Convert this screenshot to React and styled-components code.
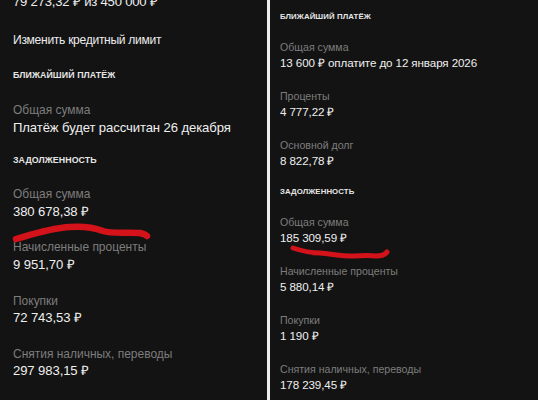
import React from 'react';
import styled, { createGlobalStyle } from 'styled-components';

const GlobalStyle = createGlobalStyle`
  *, *::before, *::after {
    box-sizing: border-box;
  }
  html, body {
    margin: 0;
    padding: 0;
    background: #131313;
  }
  body {
    font-family: "Liberation Sans", Arial, sans-serif;
    -webkit-font-smoothing: antialiased;
  }
`;

const Screen = styled.div`
  display: flex;
  flex-direction: row;
  width: 538px;
  height: 400px;
  overflow: hidden;
  background: #131313;
`;

const Divider = styled.div`
  width: 3px;
  flex: none;
  background: #ededed;
`;

const Panel = styled.section`
  position: relative;
  flex: ${p => (p.$grow ? '1' : 'none')};
  width: ${p => (p.$width ? `${p.$width}px` : 'auto')};
  display: flex;
  flex-direction: column;
  padding-left: ${p => p.$pad}px;
  padding-top: ${p => Math.max(p.$top, 0)}px;
  margin-top: ${p => Math.min(p.$top, 0)}px;
  color: #ececec;
`;

const Action = styled.div`
  font-size: ${p => (p.$narrow ? 10.7 : 11.6) * p.$k}px;
  line-height: ${p => 16 * p.$k}px;
  letter-spacing: ${p => (p.$narrow ? -0.3 : -0.2)}px;
  color: #ededed;
  margin-bottom: ${p => p.$after}px;
`;

const SectionTitle = styled.div`
  font-size: ${p => 7.8 * p.$k}px;
  line-height: ${p => 10 * p.$k}px;
  font-weight: 700;
  letter-spacing: 0.1px;
  text-transform: uppercase;
  color: #e6e6e6;
  margin-bottom: ${p => 18 * p.$k}px;
`;

const Field = styled.div`
  display: flex;
  flex-direction: column;
  margin-bottom: ${p => p.$gap}px;
`;

const Label = styled.span`
  font-size: ${p => 10.6 * p.$k}px;
  line-height: ${p => 15 * p.$k}px;
  color: #7d7d7d;
`;

const Value = styled.span`
  font-size: ${p => 11.6 * p.$k}px;
  line-height: ${p => 16 * p.$k}px;
  letter-spacing: -0.1px;
  color: #efefef;
`;

const Scribble = styled.svg`
  position: absolute;
  left: 0;
  top: 0;
  pointer-events: none;
  overflow: visible;
`;

function Section({ k, gap, title, fields }) {
  return (
    <>
      <SectionTitle $k={k}>{title}</SectionTitle>
      {fields.map(([label, value]) => (
        <Field $gap={gap} key={label}>
          <Label $k={k}>{label}</Label>
          <Value $k={k}>{value}</Value>
        </Field>
      ))}
    </>
  );
}

export default function App() {
  const kl = 1.13;
  const kr = 1;
  return (
    <Screen>
      <GlobalStyle />
      <Panel $width={267} $pad={13} $top={-7}>
        <Action $k={kl} $after={20}>79 273,32 ₽ из 450 000 ₽</Action>
        <Action $k={kl} $narrow $after={21}>Изменить кредитный лимит</Action>
        <Section
          k={kl}
          gap={18}
          title="Ближайший платёж"
          fields={[['Общая сумма', 'Платёж будет рассчитан 26 декабря']]}
        />
        <Section
          k={kl}
          gap={18}
          title="Задолженность"
          fields={[
            ['Общая сумма', '380 678,38 ₽'],
            ['Начисленные проценты', '9 951,70 ₽'],
            ['Покупки', '72 743,53 ₽'],
            ['Снятия наличных, переводы', '297 983,15 ₽'],
          ]}
        />
        <Scribble width="267" height="400">
          <path
            d="M16 246 C 30 242, 50 235, 70 234 C 85 233, 95 235, 103 238 C 112 241, 128 239, 140 240 C 144 241, 146 242, 147 243"
            fill="none"
            stroke="#d3121a"
            strokeWidth="6.5"
            strokeLinecap="round"
          />
        </Scribble>
      </Panel>
      <Divider />
      <Panel $grow $pad={10} $top={12}>
        <Section
          k={kr}
          gap={18}
          title="Ближайший платёж"
          fields={[
            ['Общая сумма', '13 600 ₽ оплатите до 12 января 2026'],
            ['Проценты', '4 777,22 ₽'],
            ['Основной долг', '8 822,78 ₽'],
          ]}
        />
        <Section
          k={kr}
          gap={18}
          title="Задолженность"
          fields={[
            ['Общая сумма', '185 309,59 ₽'],
            ['Начисленные проценты', '5 880,14 ₽'],
            ['Покупки', '1 190 ₽'],
            ['Снятия наличных, переводы', '178 239,45 ₽'],
          ]}
        />
        <Scribble width="268" height="400">
          <path
            d="M23 248 C 32 251, 40 253, 50 253 C 62 254, 72 256, 82 256 C 90 256, 98 255, 106 256 C 111 256, 115 255, 117 252"
            fill="none"
            stroke="#d3121a"
            strokeWidth="5"
            strokeLinecap="round"
          />
        </Scribble>
      </Panel>
    </Screen>
  );
}
